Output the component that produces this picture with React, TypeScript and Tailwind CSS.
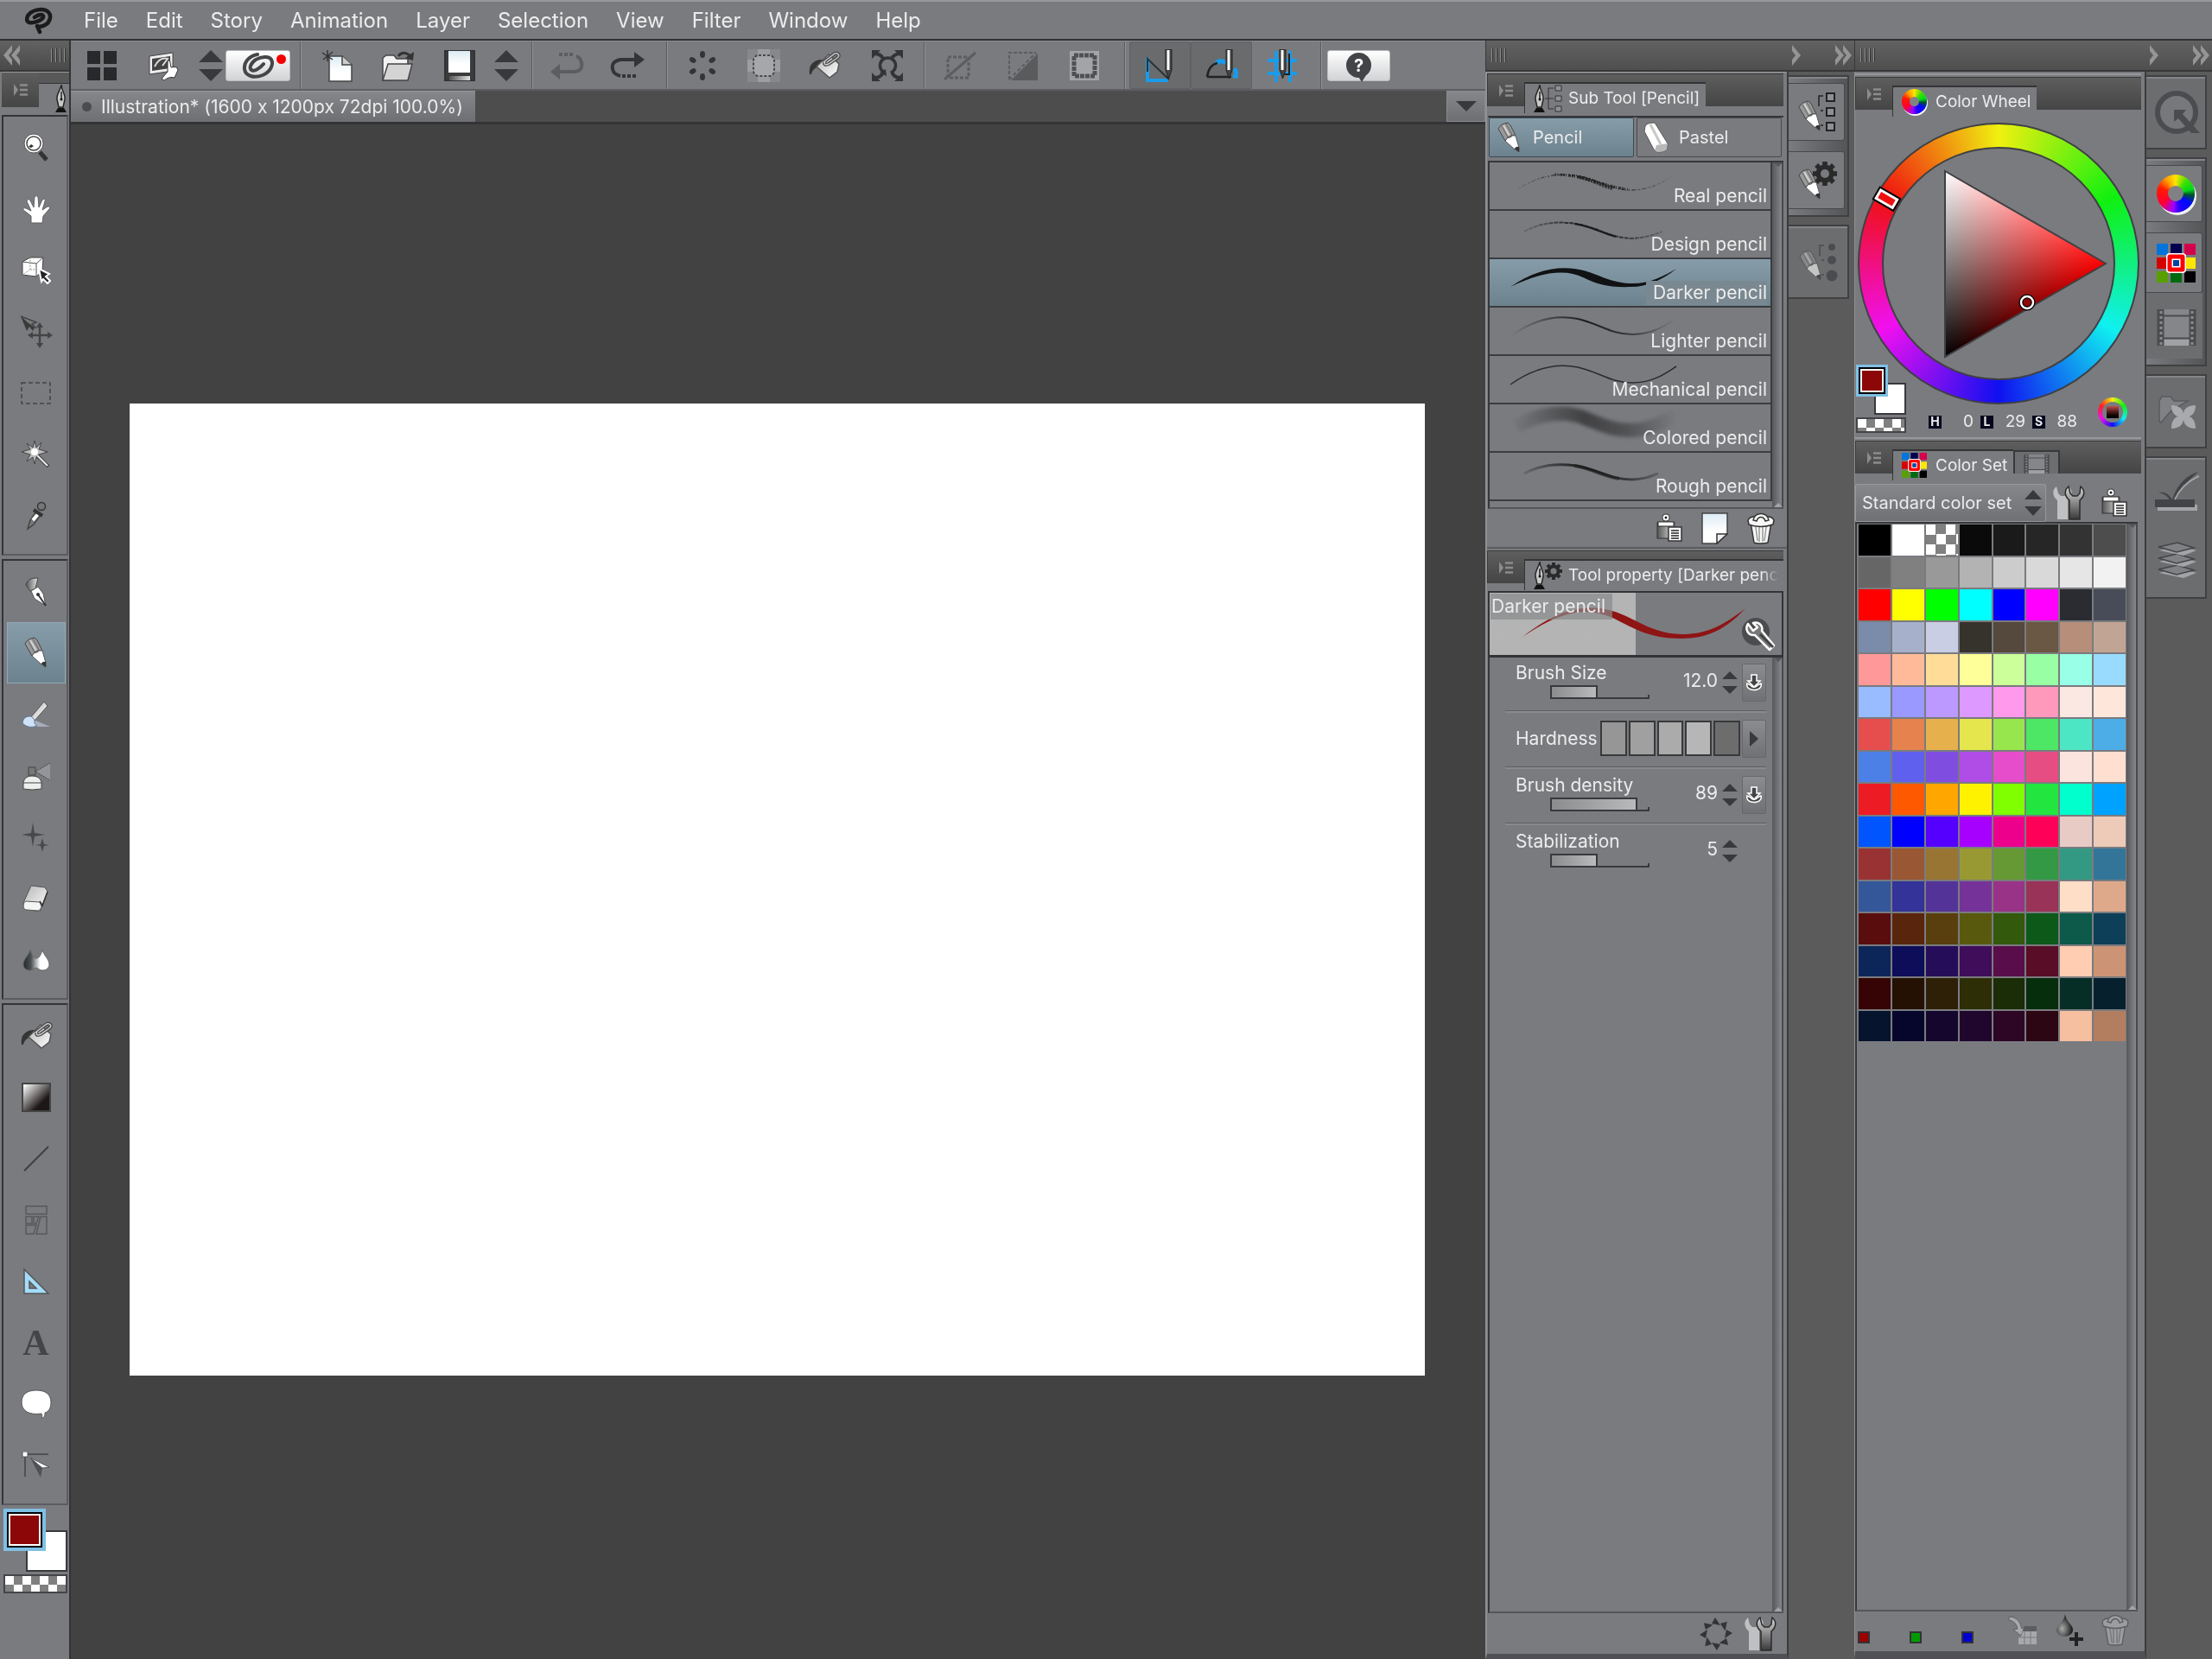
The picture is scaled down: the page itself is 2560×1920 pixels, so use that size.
import type { ReactNode } from "react";

const menus = ["File", "Edit", "Story", "Animation", "Layer", "Selection", "View", "Filter", "Window", "Help"];

const colorSet = [
  ["#000000", "#ffffff", "checker", "#0a0a0a", "#1a1a1a", "#262626", "#333333", "#4d4d4d"],
  ["#666666", "#808080", "#999999", "#b3b3b3", "#cccccc", "#d9d9d9", "#e6e6e6", "#f2f2f2"],
  ["#ff0000", "#ffff00", "#00ff00", "#00ffff", "#0000ff", "#ff00ff", "#2a2c31", "#474c58"],
  ["#7b8cab", "#a7b0cb", "#c9cee5", "#36322c", "#55483c", "#6a5744", "#b68e7a", "#c1a493"],
  ["#ff9999", "#ffbb99", "#ffdd99", "#ffff99", "#ccff99", "#99ffa5", "#99ffe6", "#99dbff"],
  ["#99bbff", "#9999ff", "#bb99ff", "#dd99ff", "#ff99ec", "#ff99bb", "#fbe8e2", "#ffe6db"],
  ["#e64d4d", "#e6824d", "#e6b04d", "#e5e64d", "#98e64d", "#4de665", "#4de6c5", "#4dade6"],
  ["#4d80e6", "#6060ee", "#804de1", "#b04de6", "#e64dcb", "#e64d82", "#fae4dd", "#ffdfcf"],
  ["#ed1c24", "#ff5900", "#ffa600", "#fff200", "#80ff00", "#22e63f", "#00ffcc", "#00a2ff"],
  ["#0055ff", "#0000ff", "#5500ff", "#a600ff", "#ec008c", "#ff0059", "#e8cbc4", "#edcbb8"],
  ["#993333", "#995733", "#997533", "#999933", "#669933", "#339945", "#339982", "#337599"],
  ["#335799", "#333399", "#543399", "#753399", "#993387", "#993357", "#ffdec8", "#dea98b"],
  ["#590d0d", "#59260d", "#593f0d", "#59590d", "#33590d", "#0d5919", "#0d594a", "#0d3f59"],
  ["#0d2659", "#0d0d59", "#260d59", "#3f0d59", "#590d4a", "#590d26", "#ffcdb2", "#cc9474"],
  ["#360404", "#241103", "#2e2006", "#2d2d06", "#1a2d06", "#062d0c", "#062d26", "#06202d"],
  ["#06142d", "#06062d", "#14062d", "#20062d", "#2d0626", "#2d0614", "#f5bfa0", "#b37e60"],
];

/* ---------- icons ---------- */

function Svg({ w, h, children, className = "" }: { w: number; h: number; children: ReactNode; className?: string }) {
  return (
    <svg width={w} height={h} viewBox={`0 0 ${w} ${h}`} fill="none" className={`shrink-0 ${className}`} aria-hidden="true">
      {children}
    </svg>
  );
}

function SharedDefs() {
  return (
    <svg className="absolute h-0 w-0" aria-hidden="true">
      <defs>
        <linearGradient id="metal" x1="0" y1="0" x2="1" y2="0">
          <stop offset="0" stopColor="#555" />
          <stop offset="1" stopColor="#e4e4e4" />
        </linearGradient>
        <linearGradient id="metalDown" x1="0" y1="0" x2="0" y2="1">
          <stop offset="0" stopColor="#d8d8d8" />
          <stop offset="1" stopColor="#3a3a3a" />
        </linearGradient>
        <linearGradient id="paper" x1="0" y1="0" x2="0" y2="1">
          <stop offset="0" stopColor="#dcebf4" />
          <stop offset="0.6" stopColor="#fff" />
        </linearGradient>
        <linearGradient id="soft" x1="0" y1="0" x2="1" y2="1">
          <stop offset="0" stopColor="#b5b5b5" />
          <stop offset="1" stopColor="#fff" />
        </linearGradient>
        <linearGradient id="whiteBlack" x1="0" y1="0" x2="1" y2="1">
          <stop offset="0.05" stopColor="#fff" />
          <stop offset="0.7" stopColor="#1d1817" />
        </linearGradient>
        <linearGradient id="fadeEnds" gradientUnits="userSpaceOnUse" x1="24" y1="0" x2="216" y2="0">
          <stop offset="0" stopColor="#1b1b1b" stopOpacity="0" />
          <stop offset="0.3" stopColor="#1b1b1b" stopOpacity="0.7" />
          <stop offset="0.45" stopColor="#1b1b1b" />
          <stop offset="0.7" stopColor="#1b1b1b" stopOpacity="0.7" />
          <stop offset="1" stopColor="#1b1b1b" stopOpacity="0" />
        </linearGradient>
        <linearGradient id="steel" x1="0" y1="0" x2="1" y2="0">
          <stop offset="0" stopColor="#23282b" />
          <stop offset="0.3" stopColor="#4d5255" />
          <stop offset="0.65" stopColor="#fff" />
        </linearGradient>
        <radialGradient id="drop" cx="0.35" cy="0.65" r="0.6">
          <stop offset="0" stopColor="#a9a9a9" />
          <stop offset="1" stopColor="#1e1e1e" />
        </radialGradient>
      </defs>
    </svg>
  );
}

function Logo() {
  return (
    <Svg w={32} h={32}>
      <path
        d="M17 29 L14 22 Q18 24 23 21 C29 18 31 10 27 6 C22 1 11 3 6 7 C1 11 1 17 5 18 C10 19 19 16 21 12 C22 8 16 8 11 12"
        stroke="#1b1b1b"
        strokeWidth="4.500"
        strokeLinecap="round"
        strokeLinejoin="round"
      />
    </Svg>
  );
}

function Spiral() {
  return (
    <Svg w={38} h={30}>
      <path
        d="M18 2 C8 4 2 11 3 19 C4 27 14 30 24 26 C33 22 37 14 34 8 C31 3 22 5 16 8 C10 12 8 18 11 20 C14 22 20 19 25 13"
        stroke="#454649"
        strokeWidth="4"
        strokeLinecap="round"
      />
    </Svg>
  );
}

function UpDown({ w = 28, h = 36 }: { w?: number; h?: number }) {
  const m = h / 2;
  return (
    <Svg w={w} h={h}>
      <path d={`M0 ${m - 4} L${w / 2} 0 L${w} ${m - 4}Z M0 ${m + 4} L${w / 2} ${h} L${w} ${m + 4}Z`} fill="#38393b" />
    </Svg>
  );
}

function PencilShape() {
  return (
    <>
      <path d="M1 8 Q4 2 12 1 L15 4 L21 16 Q13 14 9 22Z" fill="#999" stroke="#444" />
      <path d="M5 5 L12 18 M10 2 L17 15" stroke="#666" />
      <path d="M7 4 L14 16" stroke="#d5d5d5" strokeWidth="2" />
      <path d="M9 22 Q12 17 15 18 Q17 15 21 16 L25 30 L25 35 L20 32Z" fill="#fff" stroke="#555" />
      <path d="M19.500 31 Q22 28 25 29 L25 35Z" fill="#333" />
    </>
  );
}

function Pencil() {
  return (
    <Svg w={28} h={37}>
      <PencilShape />
    </Svg>
  );
}

function NibShape() {
  return (
    <>
      <path d="M8 1 C8 8 13 12 12 18 L10 27 H5 L3 18 C2 12 7 8 8 1Z" fill="#c9c9c9" stroke="#262626" strokeWidth="1.500" />
      <path d="M8 9 V18" stroke="#222" strokeWidth="1.500" />
      <circle cx="8" cy="18" r="1.500" fill="#111" />
      <path d="M1 33 L4 28 H11 L14 33Z" fill="#111" />
    </>
  );
}

function Gear({ x, y, r, fill = "#2a2a2a", hole = "#7a7b7f" }: { x: number; y: number; r: number; fill?: string; hole?: string }) {
  return (
    <g transform={`translate(${x} ${y})`}>
      {[0, 45, 90, 135].map((a) => (
        <rect key={a} x={-r / 5} y={-r} width={r / 2.5} height={r * 2} fill={fill} transform={`rotate(${a})`} />
      ))}
      <circle r={r * 0.75} fill={fill} />
      <circle r={r * 0.36} fill={hole} />
    </g>
  );
}

function Bucket() {
  return (
    <Svg w={38} h={34}>
      <path d="M2 27 C0 15 8 9 19 10 L11 19 C7 20 5 23 4 27Z" fill="#353535" />
      <path d="M10 18 L24 4 L36 15 L34 24 L25 31Z" fill="url(#soft)" stroke="#555" strokeWidth="1.500" />
      <path d="M18 13 L31 3 C36 2 37 6 34 8 L24 15 C20 17 18 15 20 12" stroke="#444" strokeWidth="4" />
      <path d="M18 13 L31 3 C36 2 37 6 34 8 L24 15 C20 17 18 15 20 12" stroke="#ccc" strokeWidth="1.500" />
    </Svg>
  );
}

function Wrenches() {
  const d = "M4 1 C-2 6 0 13 5 17 V39 H17 V17 C22 13 24 6 18 1 L17 9 L14 12 H9 L6 9Z";
  return (
    <Svg w={38} h={40}>
      <path d={d} fill="#bfc0c2" />
      <g transform="translate(14 0)">
        <path d={d} fill="url(#metalDown)" stroke="#2b2b2b" strokeWidth="1.500" />
      </g>
    </Svg>
  );
}

function ClipboardIcon() {
  return (
    <Svg w={30} h={34}>
      <rect x="1" y="11" width="20" height="18" fill="url(#metal)" stroke="#333" />
      <rect x="2" y="10" width="18" height="5" fill="#fff" stroke="#222" />
      <circle cx="11" cy="5" r="4.500" fill="#333" />
      <circle cx="11" cy="5" r="2.500" stroke="#fff" strokeWidth="2" fill="#222" />
      <rect x="14" y="16" width="15" height="16" fill="#fff" stroke="#333" strokeWidth="1.500" />
      <path d="M17 20 H26 M17 23 H26 M17 26 H26 M17 29 H26" stroke="#222" strokeWidth="1.500" />
    </Svg>
  );
}

function Trash({ dim = false }: { dim?: boolean }) {
  const line = dim ? "#5f6063" : "#333";
  const fill = dim ? "#9c9da0" : "#f7f7f7";
  return (
    <Svg w={32} h={38}>
      <path d="M4 12 L8 36 Q16 38 24 36 L28 12Z" fill={fill} stroke={line} strokeWidth="1.500" />
      <path d="M10 18 L12 34 M14 18 V35 M18 18 V35 M22 18 L20 34" stroke={dim ? "#77787b" : "#999"} strokeWidth="1.500" />
      <path d="M1 10 Q3 6 8 6 H24 Q29 6 31 10 L30 15 Q16 20 2 15Z" fill={fill} stroke={line} strokeWidth="1.500" />
      <path d="M7 10 C8 0 24 0 25 10 L21 11 C19 5 13 5 11 11Z" fill={fill} stroke={line} strokeWidth="1.500" />
    </Svg>
  );
}

function Film({ w = 46, h = 42 }: { w?: number; h?: number }) {
  return (
    <svg width={w} height={h} viewBox="0 0 46 42" preserveAspectRatio="none" fill="none" aria-hidden="true">
      <rect x="8" y="0" width="30" height="42" fill="#85868a" />
      <rect x="8" y="35" width="30" height="7" fill="#a0a1a4" />
      <path d="M8 7.500 H38 M8 33.500 H38" stroke="#4b4c4f" strokeWidth="2" />
      <path d="M4.500 0 V42 M41.500 0 V42" stroke="#4b4c4f" strokeWidth="8" />
      <path d="M5 2 V42 M41 2 V42" stroke="#8a8b8e" strokeWidth="3" strokeDasharray="3 3" />
    </svg>
  );
}

function PaletteIcon({ size = 45 }: { size?: number }) {
  const tiles = ["#0074dd", "#00004f", "#d4004b", "#d40000", "#fff", "#ffe600", "#58a000", "#006a10", "#000"];
  return (
    <svg width={size} height={size} viewBox="0 0 45 45" aria-hidden="true">
      {tiles.map((c, i) => (
        <rect key={c} x={(i % 3) * 16} y={Math.floor(i / 3) * 16} width="13" height="13" fill={c} />
      ))}
      <rect x="11" y="11" width="23" height="23" rx="4" fill="#fff" />
      <rect x="12.500" y="12.500" width="20" height="20" rx="3" fill="#f00" />
      <rect x="17.500" y="17.500" width="10" height="10" fill="#fff" />
      <rect x="19" y="19" width="7" height="7" fill="#0046a0" />
    </svg>
  );
}

function WheelIcon({ className, holeClass }: { className: string; holeClass: string }) {
  return (
    <span
      className={`flex shrink-0 items-center justify-center rounded-full bg-[conic-gradient(#ffe600,#3fe000_40deg,#00d81a_75deg,#00502c_95deg,#0008ff_125deg,#2200ff_165deg,#a000ff_190deg,#ff0030_235deg,#ff1a00_290deg,#ff9a00_325deg,#ffe600)] ${className}`}
    >
      <span className={`rounded-full bg-[#808184] ${holeClass}`} />
    </span>
  );
}

function ListGlyph() {
  return (
    <Svg w={16} h={14}>
      <path d="M0 0 L5 7 L0 14Z" fill="#8c8c8c" />
      <path d="M7 1.500 H16 M7 7 H16 M7 12.500 H16" stroke="#8c8c8c" strokeWidth="2.500" />
    </Svg>
  );
}

function ApplyIcon() {
  return (
    <Svg w={20} h={20}>
      <path d="M2 11 C-1 21 21 21 18 11 L14 13 C12 16 8 16 6 13Z" fill="#444" stroke="#fff" strokeWidth="1.500" />
      <path d="M7 1 H13 V8 H17 L10 15 L3 8 H7Z" fill="#444" stroke="#fff" strokeWidth="1.500" />
    </Svg>
  );
}

function RulerPen({ x = 0 }: { x?: number }) {
  return (
    <g transform={`translate(${x} 0)`}>
      <path d="M1 0 H8 V24 L4.500 34 L1 24Z" fill="#444" stroke="#222" />
      <path d="M4 1 V24" stroke="#fff" strokeWidth="3" />
    </g>
  );
}

/* ---------- toolbar and tool icons ---------- */

const tools: { name: string; icon: ReactNode }[][] = [
  [
    {
      name: "Zoom",
      icon: (
        <Svg w={30} h={34}>
          <path d="M19 22 L27 31" stroke="#333" strokeWidth="5" />
          <circle cx="12" cy="12" r="11" fill="#fff" stroke="#555" />
          <circle cx="12" cy="12" r="8" stroke="#444" strokeWidth="1.500" fill="#fff" />
          <path d="M6 16 L9 13 L12 15 L9 17Z" fill="#333" />
        </Svg>
      ),
    },
    {
      name: "Hand",
      icon: (
        <Svg w={34} h={34}>
          <path
            d="M11 33 L11 25 L2 18 Q1 15 5 16 L11 19 L6 8 Q7 4 10 7 L14 15 L15 3 Q17 0 19 3 L20 15 L24 6 Q28 4 27 8 L24 18 L30 14 Q34 14 32 17 L25 25 L24 33Z"
            fill="#fff"
            stroke="#606164"
          />
        </Svg>
      ),
    },
    {
      name: "Object rotation",
      icon: (
        <Svg w={34} h={32}>
          <path d="M1 6 L10 1 H25 L24 17 L17 23 L1 21Z" fill="#fff" stroke="#444" />
          <path d="M1 6 L17 8 L25 1 M17 8 V23" stroke="#555" />
          <path d="M10 1 V15 L1 21 M10 15 H24" stroke="#999" strokeDasharray="2 1" />
          <path d="M20 14 L32 20 L28 23 L33 28 L30 31 L25 26 L23 29Z" fill="#222" stroke="#fff" strokeWidth="2" />
        </Svg>
      ),
    },
    {
      name: "Move layer",
      icon: (
        <Svg w={38} h={38}>
          <path d="M1 1 L9 8 L17 14 L15 18 L11 13 L8 18Z" fill="#3a3a3a" />
          <path d="M1 1 L19 8 L14 10 L19 15" stroke="#444" strokeWidth="1.500" />
          <path d="M12 23 H34 M23 11 V35" stroke="#444" strokeWidth="2.500" />
          <path d="M9 23 L15 19 V27Z M38 23 L32 19 V27Z M23 8 L19 14 H27Z M23 38 L19 32 H27Z" fill="#444" />
        </Svg>
      ),
    },
    {
      name: "Selection area",
      icon: (
        <Svg w={36} h={26}>
          <rect x="1" y="1" width="33" height="24" stroke="#444" strokeWidth="1.500" strokeDasharray="5 3" />
        </Svg>
      ),
    },
    {
      name: "Auto select",
      icon: (
        <Svg w={34} h={34}>
          <path
            d="M15 1 L17 9 L23 3 L20 11 L30 14 L20 17 L24 25 L17 20 L15 28 L13 20 L6 25 L10 17 L0 14 L10 11 L6 4 L13 9Z"
            fill="#bbb"
            stroke="#444"
          />
          <circle cx="15" cy="14" r="4" fill="#fff" />
          <path d="M18 18 L31 31" stroke="#444" strokeWidth="4" />
          <path d="M18 18 L30 30" stroke="#eee" strokeWidth="2" />
        </Svg>
      ),
    },
    {
      name: "Eyedropper",
      icon: (
        <Svg w={24} h={34}>
          <path d="M2 32 L5 22 L12 12 L17 16 L9 27Z" fill="#777" stroke="#444" strokeWidth="1.500" />
          <path d="M8 22 L14 15" stroke="#fff" strokeWidth="4" />
          <path d="M9 10 L19 17" stroke="#333" strokeWidth="4" />
          <circle cx="18" cy="6" r="4.500" fill="#777" stroke="#333" strokeWidth="1.500" />
        </Svg>
      ),
    },
  ],
  [
    {
      name: "Pen",
      icon: (
        <Svg w={28} h={36}>
          <path d="M2 10 Q4 1 16 2 L13 14 L7 17Z" fill="url(#metal)" stroke="#444" />
          <path d="M8 17 L16 12 L22 20 L25 34 L12 26Z" fill="#fff" stroke="#555" />
          <path d="M25 34 L16 21" stroke="#333" strokeWidth="2" />
          <circle cx="16" cy="21" r="2" fill="#333" />
        </Svg>
      ),
    },
    { name: "Pencil", icon: <Pencil /> },
    {
      name: "Brush",
      icon: (
        <Svg w={34} h={34}>
          <path d="M10 31 L33 31 L14 23Z" fill="#b9c4d6" opacity="0.700" />
          <path d="M10 21 L26 2 L30 7 L15 24Z" fill="url(#soft)" stroke="#555" />
          <path d="M1 27 Q2 18 11 19 L15 23 Q14 28 18 30 Q8 34 1 27Z" fill="#cfe3f8" stroke="#5f7690" />
        </Svg>
      ),
    },
    {
      name: "Airbrush",
      icon: (
        <Svg w={34} h={34}>
          <path d="M16 12 L33 2 V22Z" fill="#94959a" />
          <path d="M33 2 L16 12 L33 22" stroke="#444" strokeDasharray="2 1" />
          <rect x="8" y="7" width="8" height="9" fill="#777" stroke="#444" />
          <path d="M2 32 V24 Q4 17 12 17 Q21 17 23 24 V32 Q12 34 2 32Z" fill="#eee" stroke="#444" />
          <path d="M2 25 H23" stroke="#444" />
        </Svg>
      ),
    },
    {
      name: "Decoration",
      icon: (
        <Svg w={34} h={34}>
          <path d="M13 0 L15 12 L27 14 L15 16 L13 28 L11 16 L0 14 L11 12Z" fill="#48494b" />
          <path d="M24 18 L26 25 L32 26 L26 27 L24 34 L22 27 L16 26 L22 25Z" fill="#48494b" />
        </Svg>
      ),
    },
    {
      name: "Eraser",
      icon: (
        <Svg w={32} h={34}>
          <path d="M10 2 L26 4 L29 9 L20 32 L3 29 L1 22Z" fill="url(#soft)" stroke="#555" />
          <path d="M4 20 Q1 21 1 25 Q1 30 5 30 L18 31 Q22 30 22 26 L20 21Z" fill="#f4f4f4" stroke="#555" />
          <path d="M20 20 L23 25 L29 9" stroke="#333" strokeWidth="1.500" />
        </Svg>
      ),
    },
    {
      name: "Blend",
      icon: (
        <Svg w={32} h={26}>
          <path
            d="M9 1 C8 7 1 12 1 18 C1 23 5 25 9 25 C12 25 14 22 16 22 C18 22 19 25 23 25 C28 25 31 22 31 18 C31 12 24 7 23 1 C22 5 20 11 16 11 C12 11 10 5 9 1Z"
            fill="url(#steel)"
            stroke="#666"
          />
        </Svg>
      ),
    },
  ],
  [
    { name: "Fill", icon: <Bucket /> },
    {
      name: "Gradient",
      icon: (
        <Svg w={34} h={34}>
          <rect x="1" y="1" width="32" height="32" fill="url(#whiteBlack)" stroke="#444" strokeWidth="2" />
        </Svg>
      ),
    },
    {
      name: "Figure",
      icon: (
        <Svg w={30} h={30}>
          <path d="M1 29 L29 1" stroke="#3f3f41" strokeWidth="2" />
        </Svg>
      ),
    },
    {
      name: "Frame border",
      icon: (
        <Svg w={26} h={34}>
          <path d="M1 1 H25 V10 H1Z M1 13 H8 V21 H1Z M10 13 H16 L13 21 H10Z M1 23 H13 L10 33 H1Z M18 13 H25 V33 H13Z" stroke="#58595c" strokeWidth="1.500" />
        </Svg>
      ),
    },
    {
      name: "Ruler",
      icon: (
        <Svg w={32} h={32}>
          <path d="M2 2 L30 30 H2Z M8 16 V24 H16Z" fill="#a3dcfa" fillRule="evenodd" stroke="#555" strokeWidth="1.500" />
        </Svg>
      ),
    },
    {
      name: "Text",
      icon: <span className="font-['Liberation_Serif',serif] text-[42px] leading-10 font-bold text-[#444547]">A</span>,
    },
    {
      name: "Balloon",
      icon: (
        <Svg w={36} h={34}>
          <path d="M18 1 C29 1 35 6 35 15 C35 22 32 26 28 27 C28 31 27 33 24 33 C25 31 25 30 24 28 C10 30 1 25 1 15 C1 6 7 1 18 1Z" fill="#fff" stroke="#555" />
        </Svg>
      ),
    },
    {
      name: "Correct line",
      icon: (
        <Svg w={34} h={32}>
          <path d="M4 3 H31 M4 3 V29" stroke="#505154" strokeWidth="2" />
          <rect x="1" y="0" width="6" height="6" fill="#fff" stroke="#555" />
          <path d="M10 7 L32 18 L24 19 L22 30Z" fill="#505154" />
          <path d="M10 7 L32 18 L24 19Z" fill="#fff" stroke="#555" />
        </Svg>
      ),
    },
  ],
];

function ToolbarButton({ label, children, className = "w-[71px]" }: { label: string; children: ReactNode; className?: string }) {
  return (
    <button type="button" aria-label={label} className={`flex h-full shrink-0 items-center justify-center ${className}`}>
      {children}
    </button>
  );
}

function Divider() {
  return <span className="h-full w-[2px] shrink-0 border-l border-[#5b5c5f] bg-[#919296]" />;
}

function Toolbar() {
  return (
    <div className="flex h-[58px] items-center border-t border-b-2 border-t-[#8a8b8f] border-b-[#5d5e61] bg-[#7a7b7f]">
      <ToolbarButton label="Workspace">
        <Svg w={34} h={34}>
          <path d="M0 0 H15 V15 H0Z M19 0 H34 V15 H19Z M0 19 H15 V34 H0Z M19 19 H34 V34 H19Z" fill="#28292b" />
        </Svg>
      </ToolbarButton>
      <ToolbarButton label="Quick access" className="w-[74px]">
        <Svg w={36} h={34}>
          <path d="M1 6 L28 2 V23 L1 27Z" fill="#eee" stroke="#444" />
          <path d="M4 9 L25 6 V20 L4 23Z" fill="#444" />
          <path d="M7 18 Q13 6 22 9 L16 17" stroke="#ddd" strokeWidth="2" />
          <path d="M22 12 Q25 9 25 14 L26 19 Q33 17 34 22 L30 31 Q24 29 18 34 L15 32 L22 24Z" fill="#fff" stroke="#333" />
        </Svg>
      </ToolbarButton>
      <ToolbarButton label="Switch view" className="w-[34px]">
        <UpDown />
      </ToolbarButton>
      <button
        type="button"
        aria-label="Clip Studio"
        className="relative flex h-9 w-[75px] shrink-0 items-center justify-center rounded-[3px] border border-[#b9babc] bg-linear-to-b from-white to-[#d2d3d5]"
      >
        <Spiral />
        <span className="absolute top-1 right-1 size-[11px] rounded-full bg-[#f50000]" />
      </button>
      <span className="w-[11px]" />
      <Divider />
      <ToolbarButton label="New" className="w-[78px] pl-1">
        <Svg w={36} h={38}>
          <path d="M9 8 H24 L35 18 V37 H9Z" fill="url(#paper)" stroke="#444" strokeWidth="1.500" />
          <path d="M24 8 V18 H35" fill="#ccc" stroke="#444" strokeWidth="1.500" />
          <path d="M7 1 V14 M1 4 L13 12 M13 3 L2 12" stroke="#333" strokeWidth="1.500" />
        </Svg>
      </ToolbarButton>
      <ToolbarButton label="Open" className="w-[68px]">
        <Svg w={38} h={36}>
          <path d="M1 35 V9 L5 6 H14 L17 10 H30 V16 L28 34Z" fill="#f2f2f2" stroke="#444" strokeWidth="1.500" />
          <path d="M7 16 H35 L30 35 H1Z" fill="#d4d4d4" stroke="#444" strokeWidth="1.500" />
          <path d="M19 7 Q24 0 32 6" stroke="#333" strokeWidth="3" />
          <path d="M37 2 L36 12 L27 9Z" fill="#333" />
        </Svg>
      </ToolbarButton>
      <ToolbarButton label="Save" className="w-[74px]">
        <Svg w={36} h={36}>
          <rect x="1" y="1" width="34" height="34" fill="#3b3c3e" stroke="#333" strokeWidth="2" />
          <rect x="5" y="1" width="25" height="25" fill="url(#paper)" />
          <rect x="6" y="30" width="24" height="5" fill="url(#metal)" />
        </Svg>
      </ToolbarButton>
      <ToolbarButton label="Save options" className="w-[34px]">
        <UpDown />
      </ToolbarButton>
      <span className="w-[12px]" />
      <Divider />
      <ToolbarButton label="Undo" className="w-[80px]">
        <Svg w={40} h={32}>
          <path d="M5 23 H28 Q38 22 36 12 Q34 6 30 5" stroke="#5c5d60" strokeWidth="4" />
          <path d="M10 3 H28" stroke="#5c5d60" strokeWidth="4" strokeDasharray="4 2" />
          <path d="M0 23 L11 14 V32Z" fill="#5c5d60" />
        </Svg>
      </ToolbarButton>
      <ToolbarButton label="Redo" className="w-[74px] pr-4">
        <Svg w={40} h={32}>
          <path d="M34 9 H12 Q1 11 3 20 Q4 26 12 28" stroke="#333436" strokeWidth="4" />
          <path d="M14 28 H31" stroke="#333436" strokeWidth="4" strokeDasharray="4 2" />
          <path d="M40 9 L28 0 V18Z" fill="#333436" />
        </Svg>
      </ToolbarButton>
      <Divider />
      <ToolbarButton label="Clear" className="w-[80px]">
        <Svg w={32} h={34}>
          {[0, 60, 120, 180, 240, 300].map((a) => (
            <ellipse key={a} cx="16" cy="4" rx="3" ry="4" fill="#333436" transform={`rotate(${a} 16 17)`} />
          ))}
        </Svg>
      </ToolbarButton>
      <ToolbarButton label="Delete outside selection" className="w-[62px]">
        <Svg w={38} h={38}>
          <rect width="38" height="38" fill="#87888b" />
          <path d="M12 0 H26 V38 H12Z M0 12 H38 V26 H0Z" fill="#9d9ea1" />
          <rect x="7" y="7" width="24" height="24" rx="6" fill="#a6a7aa" stroke="#48494b" strokeWidth="2" strokeDasharray="3 2" />
        </Svg>
      </ToolbarButton>
      <ToolbarButton label="Fill" className="w-[78px]">
        <Bucket />
      </ToolbarButton>
      <ToolbarButton label="Scale up/down/rotate" className="w-[67px]">
        <Svg w={36} h={36}>
          <path d="M13 25 A9 9 0 1 1 24 25" stroke="#333436" strokeWidth="3.500" />
          <path d="M4 4 Q11 5 13 10 M32 4 Q25 5 23 10 M23 24 Q24 31 32 32 M13 25 Q12 31 4 32" stroke="#333436" strokeWidth="4" />
          <path d="M0 0 H10 L0 10Z M36 0 H26 L36 10Z M0 36 H10 L0 26Z M36 36 H26 L36 26Z M16 22 L17 30 L9 26Z" fill="#333436" />
        </Svg>
      </ToolbarButton>
      <span className="w-[9px]" />
      <Divider />
      <ToolbarButton label="Deselect" className="w-[80px]">
        <Svg w={38} h={34}>
          <rect x="5" y="7" width="24" height="24" stroke="#5c5d60" strokeWidth="3" strokeDasharray="4 2" />
          <path d="M1 33 L37 2" stroke="#5c5d60" strokeWidth="3" />
        </Svg>
      </ToolbarButton>
      <ToolbarButton label="Invert selected area" className="w-[66px]">
        <Svg w={34} h={34}>
          <path d="M1 33 V2 H32" stroke="#5c5d60" strokeWidth="2" strokeDasharray="4 2" />
          <path d="M1 33 L32 2" stroke="#5c5d60" strokeWidth="2" strokeDasharray="4 3" />
          <path d="M34 3 V34 H3Z" fill="#5a5b5d" />
        </Svg>
      </ToolbarButton>
      <ToolbarButton label="Show selection border" className="w-[76px]">
        <Svg w={34} h={34}>
          <rect width="34" height="34" fill="#a3a4a7" />
          <rect x="5" y="5" width="24" height="24" stroke="#4f5052" strokeWidth="5" strokeDasharray="5 1" />
        </Svg>
      </ToolbarButton>
      <span className="w-[8px]" />
      <Divider />
      <span className="w-[4px]" />
      <ToolbarButton label="Snap to ruler" className="w-[71px] rounded-[2px] border border-[#606164] bg-[#6a6b6d]">
        <Svg w={36} h={38}>
          <path d="M3 10 V36 H27" stroke="#1a9bea" strokeWidth="4" />
          <path d="M3 26 V11 L28 35" stroke="#263238" strokeWidth="2" />
          <RulerPen x={23} />
        </Svg>
      </ToolbarButton>
      <ToolbarButton label="Snap to special ruler" className="w-[71px] rounded-[2px] border border-[#606164] bg-[#6a6b6d]">
        <Svg w={38} h={38}>
          <path d="M12 17 Q17 11 24 16 M34 22 L37 31 H32" stroke="#1a9bea" strokeWidth="5" />
          <path d="M2 32 Q4 18 14 16 M2 32 H30" stroke="#222" strokeWidth="2.500" />
          <RulerPen x={23} />
        </Svg>
      </ToolbarButton>
      <ToolbarButton label="Snap to grid">
        <Svg w={36} h={38}>
          <path d="M10 2 V38 M26 2 V38 M0 13 H34 M0 28 H34" stroke="#1a9bea" strokeWidth="4" />
          <path d="M17 29 H25 V5" stroke="#222" strokeWidth="2" />
          <RulerPen x={13} />
        </Svg>
      </ToolbarButton>
      <span className="w-[8px]" />
      <Divider />
      <span className="w-[6px]" />
      <button
        type="button"
        aria-label="Support"
        className="flex h-9 w-[73px] shrink-0 items-center justify-center rounded-[3px] border border-[#b9babc] bg-linear-to-b from-white to-[#d2d3d5]"
      >
        <span className="relative flex size-[29px] items-center justify-center rounded-full bg-[#434447] text-xl font-bold text-white">
          ?
          <span className="absolute -bottom-[5px] left-[13px] border-x-[5px] border-t-[8px] border-x-transparent border-t-[#434447]" />
        </span>
      </button>
    </div>
  );
}

/* ---------- shared panel parts ---------- */

function Grip() {
  return (
    <span className="flex gap-[3px]">
      {[0, 1, 2, 3].map((i) => (
        <span key={i} className="h-4 w-[2px] border-l border-[#8f8f8f] bg-[#333]" />
      ))}
    </span>
  );
}

function Chevrons({ double = false, left = false }: { double?: boolean; left?: boolean }) {
  return (
    <Svg w={double ? 20 : 11} h={24} className={left ? "rotate-180" : ""}>
      <path d="M0 0 L10 12 L0 24 V17 L4 12 L0 7Z" fill="#959595" />
      {double && <path d="M9 0 L19 12 L9 24 V17 L13 12 L9 7Z" fill="#959595" />}
    </Svg>
  );
}

function DockHeader() {
  return (
    <div className="flex h-9 items-center border-b-2 border-l border-[#37383a] bg-linear-to-b from-[#626262] to-[#4f4f4f] pr-[2px] pl-[6px]">
      <Grip />
      <button type="button" aria-label="Collapse panel" className="mr-[39px] ml-auto">
        <Chevrons />
      </button>
      <button type="button" aria-label="Collapse dock">
        <Chevrons double />
      </button>
    </div>
  );
}

function PanelTabs({ icon, title, extra, fill = false }: { icon: ReactNode; title: string; extra?: ReactNode; fill?: boolean }) {
  return (
    <div className="flex h-[38px] items-end border-t border-l border-[#3a3a3b] bg-linear-to-b from-[#5e5e5e] to-[#454545]">
      <button type="button" aria-label="Panel menu" className="flex h-full w-[42px] items-center justify-center">
        <ListGlyph />
      </button>
      <div
        className={`relative -mb-2 flex h-[36px] items-center gap-[7px] border-t-2 border-l border-[#333436] bg-[#7a7b7f] pb-px pl-[9px] ${fill ? "flex-1" : "pr-[7px]"}`}
      >
        {icon}
        <h2
          className={`text-[19px] leading-6 whitespace-nowrap ${fill ? "[mask-image:linear-gradient(to_right,black_92%,transparent)]" : ""}`}
        >
          {title}
        </h2>
      </div>
      {extra}
    </div>
  );
}

function Swatches({ big = false }: { big?: boolean }) {
  return (
    <div className={big ? "w-[74px]" : "w-[58px]"}>
      <div className={`relative ${big ? "h-[73px]" : "h-[58px]"}`}>
        <button
          type="button"
          aria-label="Sub color"
          className={`absolute right-0 bottom-0 border-2 border-[#38393b] bg-white ${big ? "size-[48px]" : "size-[37px]"}`}
        />
        <button
          type="button"
          aria-label="Main color"
          className={`absolute top-0 left-0 border-[#7fc0e4] p-0 ${big ? "size-[49px] border-4" : "size-[37px] border-[3px]"}`}
        >
          <span className="block size-full border-2 border-black bg-white p-[2px]">
            <span className="block size-full bg-[#8c0707]" />
          </span>
        </button>
      </div>
      <button
        type="button"
        aria-label="Transparent color"
        className={`mt-[3px] block w-full border-2 border-[#444548] bg-[conic-gradient(#808080_25%,#fff_25%_50%,#808080_50%_75%,#fff_75%)] bg-[length:20px_20px] ${big ? "h-[22px]" : "h-[18px]"}`}
      />
    </div>
  );
}

function ScrollTrack() {
  return (
    <div className="flex w-[13px] shrink-0 flex-col items-center justify-between border-x-2 border-l-[#5b5c5f] border-r-[#48494c] bg-linear-to-r from-[#5f6063] to-[#86878b]">
      <span className="border-x-[5px] border-t-[5px] border-x-transparent border-t-[#55565a]" />
      <span className="border-x-[5px] border-b-[5px] border-x-transparent border-b-[#a3a4a7]" />
    </div>
  );
}

/* ---------- sub tool + tool property ---------- */

const subTools: { name: string; stroke: ReactNode; active?: boolean }[] = [
  {
    name: "Real pencil",
    stroke: (
      <>
        <path d="M34 30 C60 14 80 13 100 15 C128 20 138 32 165 32 C190 31 205 20 214 14" stroke="url(#fadeEnds)" strokeWidth="1.500" strokeDasharray="2 2 4 1 1 2" />
        <path d="M75 14 C110 14 128 27 160 31" stroke="url(#fadeEnds)" strokeWidth="3" strokeDasharray="2 1 1 2 3 1" />
        <path d="M104 17 C118 20 128 26 142 30" stroke="#222" strokeWidth="4" strokeDasharray="2 1 3 1" opacity="0.800" />
      </>
    ),
  },
  {
    name: "Design pencil",
    stroke: (
      <>
        <path d="M40 24 C60 13 80 12 100 15 C128 20 138 31 165 32 C180 31 190 28 200 24" stroke="url(#fadeEnds)" strokeWidth="2" strokeDasharray="5 1" />
        <path d="M98 15 C118 18 128 25 146 30" stroke="#1b1b1b" strokeWidth="2" />
      </>
    ),
  },
  {
    name: "Darker pencil",
    stroke: (
      <path
        d="M24 32 C50 14 75 8 98 11 C122 14 136 27 162 28 C185 29 202 19 216 11 C200 24 182 32 164 32 C138 33 124 29 108 21 C90 12 62 13 24 32Z"
        fill="#101214"
      />
    ),
    active: true,
  },
  {
    name: "Lighter pencil",
    stroke: <path d="M26 32 C55 11 82 9 102 13 C128 19 140 31 165 31 C190 31 205 19 214 14" stroke="url(#fadeEnds)" strokeWidth="2" />,
  },
  {
    name: "Mechanical pencil",
    stroke: <path d="M24 33 C55 11 82 9 102 13 C128 19 140 31 165 31 C190 31 205 19 216 12" stroke="#2b2b2b" strokeWidth="1.500" />,
  },
  {
    name: "Colored pencil",
    stroke: (
      <path d="M30 26 C60 8 90 8 110 16 C130 24 145 31 165 30 C185 30 200 20 216 14" stroke="url(#fadeEnds)" strokeWidth="16" opacity="0.600" className="blur-[2px]" />
    ),
  },
  {
    name: "Rough pencil",
    stroke: (
      <>
        <path d="M40 24 C60 13 80 12 100 15 C128 20 138 31 165 31 C180 30 185 28 195 24" stroke="url(#fadeEnds)" strokeWidth="3" />
        <path d="M98 15 C118 18 128 26 150 30" stroke="#1f1f1f" strokeWidth="4" opacity="0.600" />
      </>
    ),
  },
];

function SubToolPanel() {
  return (
    <section className="border-t border-[#97989b] pt-px">
      <div className="mr-[4px]">
        <PanelTabs
          title="Sub Tool [Pencil]"
          icon={
            <Svg w={34} h={34}>
              <NibShape />
              <path d="M24 5 H18 V29 H24 M14 17 H24" stroke="#333" />
              <path d="M26 2 H33 V8 H26Z M26 14 H33 V20 H26Z M26 26 H33 V32 H26Z" fill="#8f9093" stroke="#333" />
            </Svg>
          }
        />
      </div>
      <div className="mt-[11px] mr-[4px] ml-px grid h-[49px] grid-cols-2 gap-[3px] border-t-2 border-[#36373a] pr-[2px] pb-px pl-px text-[20px]">
        <button
          type="button"
          className="flex items-center gap-[13px] rounded-[2px] border border-[#3a4a53] bg-linear-to-b from-[#879ca9] to-[#6c838f] pl-[9px]"
        >
          <Pencil />
          Pencil
        </button>
        <button type="button" className="flex items-center gap-[11px] rounded-[2px] border border-[#48494c] pl-[7px]">
          <Svg w={30} h={36}>
            <path d="M2 5 Q4 1 13 1 L28 25 L27 32 Q24 35 16 35 L12 32 L1 11Z" fill="#fff" stroke="#555" />
            <path d="M28 25 L15 27 L13 33 L16 35 Q24 35 27 32Z" fill="#b9b9b9" />
            <path d="M8 3 L20 26" stroke="#c9c9c9" strokeWidth="3" />
          </Svg>
          Pastel
        </button>
      </div>
      <div className="mt-[3px] mr-[4px] ml-px flex border-t-2 border-b-2 border-l-2 border-t-[#36373a] border-b-[#55565a] border-l-[#36373a]">
        <ul className="mb-[7px] min-w-0 flex-1 border-r-2 border-[#3b3c3f]">
          {subTools.map((t) => (
            <li key={t.name} className="h-14 border-b-2 border-[#3b3c3f]">
              <button
                type="button"
                className={`relative flex size-full items-end justify-end pr-[4px] pb-px text-[21px] leading-7 ${t.active ? "bg-linear-to-b from-[#879ca9] to-[#6c838f]" : ""}`}
              >
                <Svg w={240} h={46} className="absolute top-0 left-0">
                  {t.stroke}
                </Svg>
                <span className={`relative pl-2 ${t.active ? "bg-[#7a8891]" : ""}`}>{t.name}</span>
              </button>
            </li>
          ))}
        </ul>
        <ScrollTrack />
      </div>
      <div className="flex h-[46px] items-center justify-end gap-[22px] border-b-2 border-[#5b5c5f] pr-[14px]">
        <button type="button" aria-label="Register material">
          <ClipboardIcon />
        </button>
        <button type="button" aria-label="Create sub tool">
          <Svg w={31} h={37}>
            <path d="M1 1 H30 V25 L18 36 H1Z" fill="url(#paper)" stroke="#444" strokeWidth="1.500" />
            <path d="M18 36 V25 H30Z" fill="#eee" stroke="#333" strokeWidth="1.500" />
          </Svg>
        </button>
        <button type="button" aria-label="Delete sub tool">
          <Trash />
        </button>
      </div>
    </section>
  );
}

function PropertyRow({ children, last = false }: { children: ReactNode; last?: boolean }) {
  return <div className={`flex h-14 ${last ? "" : "border-b border-[#5d5e61] shadow-[0_2px_0_#898a8e]"}`}>{children}</div>;
}

type SliderProps = { id: string; label: string; value: string; percent: number; apply?: boolean; last?: boolean };

function SliderRow({ id, label, value, percent, apply = false, last = false }: SliderProps) {
  return (
    <PropertyRow last={last}>
      <div className="flex-1 pl-3">
        <label htmlFor={id} className="block leading-6">
          {label}
        </label>
        <div className="relative mt-[2px] ml-10 h-4 w-[115px] border-b-2 border-[#38393b]">
          <span
            className="absolute inset-y-0 left-0 border-2 border-b-0 border-[#38393b] bg-linear-to-r from-[#8b8c8e] to-[#b9babb]"
            style={{ width: `${percent}%` }}
          />
          <span className="absolute right-0 bottom-0 h-[3px] w-[2px] bg-[#38393b]" />
          <input id={id} type="range" defaultValue={percent} className="absolute inset-0 size-full opacity-0" />
        </div>
      </div>
      <div className="flex h-[45px] items-center">
        <input type="text" aria-label={`${label} value`} defaultValue={value} className="mb-1 w-14 bg-transparent text-right" />
        <button type="button" aria-label={`Adjust ${label}`} className="mx-[5px]">
          <UpDown w={18} h={26} />
        </button>
        {apply ? (
          <button
            type="button"
            aria-label={`${label} dynamics`}
            className="flex h-11 w-[28px] items-center justify-center rounded-[2px] border border-[#66676a] bg-linear-to-b from-[#8b8c8f] to-[#707174]"
          >
            <ApplyIcon />
          </button>
        ) : (
          <span className="w-[28px]" />
        )}
      </div>
    </PropertyRow>
  );
}

function ToolPropertyPanel() {
  return (
    <section className="flex min-h-0 flex-1 flex-col pt-[2px]">
      <div className="mr-[4px]">
        <PanelTabs
          fill
          title="Tool property [Darker penc"
          icon={
            <Svg w={34} h={34}>
              <NibShape />
              <Gear x={24} y={12} r={10} />
            </Svg>
          }
        />
      </div>
      <div className="relative mt-[9px] mr-[4px] ml-px h-[77px] shrink-0 border-2 border-b-[3px] border-[#333436] bg-linear-to-r from-[#b4b4b4] from-50% to-[#7a7b7f] to-50%">
        <Svg w={334} h={72} className="absolute top-0 left-0">
          <path
            d="M34 54 C70 26 95 15 128 18 C165 23 180 47 222 48 C252 48 270 38 296 18 C274 42 252 53 222 53 C182 53 164 39 140 28 C105 14 72 27 34 54Z"
            fill="#8f1414"
          />
        </Svg>
        <span className="absolute top-px left-px bg-[#88898a]/70 pr-2 pl-px text-[21px] leading-[30px]">Darker pencil</span>
        <button type="button" aria-label="Sub tool detail" className="absolute right-[7px] bottom-[2px]">
          <Svg w={40} h={42}>
            <circle cx="17" cy="17" r="16" fill="#4b4c4e" />
            <path d="M8 8 C4 14 8 22 16 21 L33 38 L38 33 L24 16 C26 10 20 5 14 7 L19 12 L14 16Z" fill="#777" stroke="#fff" strokeWidth="2.500" strokeLinejoin="round" />
            <path d="M22 20 L37 35" stroke="#444" strokeWidth="3" />
          </Svg>
        </button>
      </div>
      <div className="mr-[4px] ml-px flex min-h-0 flex-1 border-b-2 border-l-2 border-b-[#55565a] border-l-[#36373a]">
        <div className="flex min-w-0 flex-1 flex-col gap-[9px] pt-[6px] pr-[7px] pl-[18px] text-[21px]">
          <SliderRow id="brush-size" label="Brush Size" value="12.0" percent={48} apply />
          <PropertyRow>
            <span className="w-[110px] pl-3 leading-[45px]">Hardness</span>
            <div className="flex h-[45px] flex-1 items-center gap-[2px]">
              <button type="button" aria-label="Hardness 1" className="h-[41px] flex-1 border-2 border-[#38393b] bg-[#969696]" />
              <button type="button" aria-label="Hardness 2" className="h-[41px] flex-1 border-2 border-[#38393b] bg-[#a0a0a0]" />
              <button type="button" aria-label="Hardness 3" className="h-[41px] flex-1 border-2 border-[#38393b] bg-[#ababab]" />
              <button type="button" aria-label="Hardness 4" className="h-[41px] flex-1 border-2 border-[#38393b] bg-[#b6b6b6]" />
              <button type="button" aria-label="Hardness 5" className="h-[41px] flex-1 border-2 border-[#38393b] bg-[#6d6d6d]" />
              <button
                type="button"
                aria-label="More hardness"
                className="flex h-11 w-[28px] items-center justify-center rounded-[2px] border border-[#66676a] bg-linear-to-b from-[#8b8c8f] to-[#707174]"
              >
                <Svg w={10} h={18}>
                  <path d="M0 0 L10 9 L0 18Z" fill="#38393b" />
                </Svg>
              </button>
            </div>
          </PropertyRow>
          <SliderRow id="density" label="Brush density" value="89" percent={88} apply />
          <SliderRow id="stabilization" label="Stabilization" value="5" percent={48} last />
        </div>
        <ScrollTrack />
      </div>
      <div className="flex h-[47px] shrink-0 items-center justify-end gap-[14px] pr-[11px]">
        <button type="button" aria-label="Reset">
          <Svg w={38} h={38}>
            {[0, 45, 90, 135, 180, 225, 270, 315].map((a) => (
              <path key={a} d="M14 7 L18 0 L24 9Z" fill="#333436" transform={`rotate(${a} 19 19)`} />
            ))}
          </Svg>
        </button>
        <button type="button" aria-label="Tool settings">
          <Wrenches />
        </button>
      </div>
    </section>
  );
}

/* ---------- color panels ---------- */

function ColorWheel() {
  return (
    <div className="relative mx-auto size-[328px]">
      <div className="absolute inset-px rounded-full border-2 border-[#3f4043] bg-[conic-gradient(from_-60deg,#f01010,#f0f010,#10f010,#10f0f0,#1010f0,#f010f0,#f01010)]">
        <div className="absolute inset-[26px] rounded-full border-2 border-[#3f4043] bg-[#7a7b7f]" />
      </div>
      <Svg w={328} h={328} className="absolute inset-0">
        <defs>
          <linearGradient id="triRed" gradientUnits="userSpaceOnUse" x1="102" y1="272" x2="195" y2="110">
            <stop offset="0" stopColor="#000" />
            <stop offset="1" stopColor="#f00" />
          </linearGradient>
          <linearGradient id="triCyan" gradientUnits="userSpaceOnUse" x1="102" y1="57" x2="195" y2="218">
            <stop offset="0" stopColor="#0ff" />
            <stop offset="1" stopColor="#000" />
          </linearGradient>
        </defs>
        <path d="M102 57 L288 164 L102 272Z" fill="url(#triRed)" />
        <path d="M102 57 L288 164 L102 272Z" fill="url(#triCyan)" className="mix-blend-screen" />
        <path d="M102 57 L288 164 L102 272Z" stroke="#3f4043" strokeWidth="2" />
        <circle cx="197" cy="209" r="7" fill="#8c0707" stroke="#000" strokeWidth="5" />
        <circle cx="197" cy="209" r="7" stroke="#fff" strokeWidth="2.500" />
        <g transform="rotate(30 34 89)">
          <rect x="20" y="80" width="29" height="18" fill="#000" />
          <rect x="22" y="82" width="25" height="14" fill="#fff" />
          <rect x="25" y="85" width="19" height="8" fill="#f01010" />
        </g>
      </Svg>
    </div>
  );
}

function HlsValue({ tag, value }: { tag: string; value: string }) {
  return (
    <div className="flex w-[60px] items-center">
      <span className="flex size-[15px] items-center justify-center bg-[#05051c] text-sm leading-none font-bold">{tag}</span>
      <span className="w-[37px] text-right text-[19px] leading-5">{value}</span>
    </div>
  );
}

function ColorPanels() {
  return (
    <div className="flex w-[338px] shrink-0 flex-col border-r-2 border-b-[9px] border-l border-r-[#3a3b3e] border-b-[#505154] border-l-[#8f9094] bg-[#7a7b7f]">
      <section className="mt-[2px] mr-[4px] border-t-2 border-[#97989b] pt-[2px]">
        <PanelTabs
          title="Color Wheel"
          icon={<WheelIcon className="mr-[3px] ml-px size-[29px] shadow-[1px_2px_0_#f5f5f5]" holeClass="size-[11px]" />}
        />
        <div className="pt-[14px]">
          <ColorWheel />
        </div>
        <div className="relative -mt-[47px] flex h-[84px] items-start pl-px">
          <Swatches />
          <div className="mt-[56px] ml-[26px] flex">
            <HlsValue tag="H" value="0" />
            <HlsValue tag="L" value="29" />
            <HlsValue tag="S" value="88" />
          </div>
          <button
            type="button"
            aria-label="Switch color space"
            className="mt-[38px] mr-[16px] ml-auto flex size-[34px] items-center justify-center rounded-full bg-[conic-gradient(from_-60deg,#ff2020,#f0f010,#10f010,#10f0f0,#1010f0,#f010f0,#ff2020)]"
          >
            <span className="flex size-6 items-center justify-center rounded-full bg-[#7a7b7f]">
              <span className="size-[14px] bg-linear-to-b from-[#c05050] to-black" />
            </span>
          </button>
        </div>
      </section>
      <section className="mr-[4px] flex min-h-0 flex-1 flex-col border-t-2 border-[#97989b] pt-[2px]">
        <PanelTabs
          title="Color Set"
          icon={
            <span className="mr-[3px] ml-px">
              <PaletteIcon size={29} />
            </span>
          }
          extra={
            <button type="button" aria-label="Timeline" className="flex h-[27px] w-[54px] items-end justify-center border-2 border-b-0 border-[#38393b] bg-[#6d6e70]">
              <Film w={30} h={22} />
            </button>
          }
        />
        <div className="mt-3 mr-[16px] flex h-11 items-center">
          <div className="relative h-full w-[221px] rounded-[2px] border border-[#97989b] bg-linear-to-b from-[#86878b] to-[#707174]">
            <select aria-label="Color set" className="size-full appearance-none bg-transparent pl-[7px] text-[20px]">
              <option>Standard color set</option>
            </select>
            <span className="pointer-events-none absolute top-[6px] right-[4px]">
              <UpDown w={20} h={30} />
            </span>
          </div>
          <button type="button" aria-label="Edit color set" className="ml-[8px]">
            <Wrenches />
          </button>
          <button type="button" aria-label="Register color set" className="ml-auto">
            <ClipboardIcon />
          </button>
        </div>
        <div className="mr-[4px] flex min-h-0 flex-1 border-t-2 border-b-2 border-l-2 border-t-[#36373a] border-b-[#55565a] border-l-[#36373a]">
          <div className="flex-1 pt-px pr-px pl-[2px]">
            <div className="grid h-[598px] grid-cols-8 grid-rows-16 gap-[2px]">
              {colorSet.flat().map((c, i) =>
                c === "checker" ? (
                  <button
                    key={i}
                    type="button"
                    aria-label="Transparent"
                    className="bg-[conic-gradient(#808080_25%,#fff_25%_50%,#808080_50%_75%,#fff_75%)] bg-[length:23px_23px]"
                  />
                ) : (
                  <button key={i} type="button" aria-label={c} style={{ backgroundColor: c }} />
                ),
              )}
            </div>
          </div>
          <ScrollTrack />
        </div>
        <div className="flex h-[46px] shrink-0 items-center pr-[14px] pl-[3px]">
          <div className="mt-[14px] flex gap-[46px]">
            <button type="button" aria-label="Red" className="size-[14px] border-2 border-[#333436] bg-[#9b0000]" />
            <button type="button" aria-label="Green" className="size-[14px] border-2 border-[#333436] bg-[#009b00]" />
            <button type="button" aria-label="Blue" className="size-[14px] border-2 border-[#333436] bg-[#0000d0]" />
          </div>
          <div className="mb-1 ml-auto flex items-center gap-[21px]">
            <button type="button" aria-label="Replace color">
              <Svg w={34} h={36}>
                <path d="M1 3 Q13 3 16 17 L19 15 L15 25 L6 18 L11 17 Q9 8 1 7Z" fill="#a7a8ab" stroke="#5f6063" />
                <path d="M17 20 L19 14 H33 V20Z" fill="#5c5d60" />
                <path d="M17 20 H33 V35 H12 V27 L15 26Z" fill="#a7a8ab" />
                <path d="M12 27 H33 M19 20 V35 M26 20 V35" stroke="#7a7b7f" />
              </Svg>
            </button>
            <button type="button" aria-label="Add color">
              <Svg w={32} h={38}>
                <path d="M11 1 C12 10 21 14 20 20 C19 29 2 29 1 20 C1 14 10 10 11 1Z" fill="url(#drop)" />
                <path d="M16 30 H32 M24 22 V38" stroke="#222" strokeWidth="4" />
              </Svg>
            </button>
            <button type="button" aria-label="Delete color">
              <Trash dim />
            </button>
          </div>
        </div>
      </section>
    </div>
  );
}

/* ---------- icon docks ---------- */

function DockSlot({ label, children, active = false, className }: { label: string; children: ReactNode; active?: boolean; className: string }) {
  return (
    <button
      type="button"
      aria-label={label}
      className={`flex w-full items-center justify-center pl-1 ${active ? "rounded-r-[3px] border-y border-r border-[#48494c] bg-[#7a7b7f]" : ""} ${className}`}
    >
      {children}
    </button>
  );
}

const dockBox = "w-[70px] border-2 border-l-0 border-[#3f4042] shadow-[inset_0_2px_0_#85868a]";

function SubToolDock() {
  return (
    <div className="flex flex-1 flex-col gap-[9px] pt-1">
      <div className={`${dockBox} flex h-[164px] flex-col gap-3 bg-linear-to-r from-[#7a7b7f] to-[#545557] py-[7px] pr-[3px]`}>
        <DockSlot label="Sub Tool" active className="h-[67px]">
          <Svg w={46} h={46}>
            <g transform="translate(0 9)">
              <PencilShape />
            </g>
            <path d="M24 16 V4 H29 M26 21 H29 M26 38 H29" stroke="#222" strokeWidth="1.500" />
            <path d="M33 1 H42 V10 H33Z M33 18 H42 V27 H33Z M33 35 H42 V44 H33Z" fill="#8f9093" stroke="#222" strokeWidth="2" />
          </Svg>
        </DockSlot>
        <DockSlot label="Tool property" active className="h-[67px]">
          <Svg w={46} h={46}>
            <g transform="translate(0 9)">
              <PencilShape />
            </g>
            <Gear x={31} y={15} r={14} />
          </Svg>
        </DockSlot>
      </div>
      <div className={`${dockBox} flex h-[86px] bg-[#6c6d6f] pr-[3px]`}>
        <DockSlot label="Brush size" className="h-full">
          <Svg w={46} h={46}>
            <g transform="translate(0 9)" opacity="0.600">
              <PencilShape />
            </g>
            <path d="M24 16 V4 H29 M26 21 H29 M26 38 H29" stroke="#4b4c4f" strokeWidth="1.500" />
            <circle cx="38" cy="6" r="4" fill="#4b4c4f" />
            <circle cx="38" cy="21" r="5" fill="#4b4c4f" />
            <circle cx="38" cy="39" r="6.500" fill="#4b4c4f" />
          </Svg>
        </DockSlot>
      </div>
    </div>
  );
}

function MaterialDock() {
  return (
    <div className="flex flex-1 flex-col gap-[9px] pt-1">
      <div className={`${dockBox} flex h-[86px] bg-[#6c6d6f]`}>
        <DockSlot label="Quick access" className="h-full">
          <Svg w={56} h={54}>
            <circle cx="27" cy="27" r="22" fill="#77787b" stroke="#4b4c4f" strokeWidth="6" />
            <path d="M24 24 L38 24 L34 29 L54 51 H44 L29 34 L24 38Z" fill="#4b4c4f" />
          </Svg>
        </DockSlot>
      </div>
      <div className={`${dockBox} flex h-[242px] flex-col bg-[#6c6d6f] bg-linear-to-r from-[#7a7b7f] to-[#545557] py-[7px] pr-[3px]`}>
        <DockSlot label="Color Wheel" active className="mb-3 h-[66px]">
          <WheelIcon className="size-[44px] shadow-[2px_3px_0_#f0f0f0]" holeClass="size-[18px]" />
        </DockSlot>
        <DockSlot label="Color Set" active className="h-[70px]">
          <PaletteIcon />
        </DockSlot>
        <DockSlot label="Timeline" className="flex-1 bg-[#6c6d6f] pt-1">
          <Film />
        </DockSlot>
      </div>
      <div className={`${dockBox} flex h-[86px] bg-[#6c6d6f]`}>
        <DockSlot label="Material" className="h-full pt-1">
          <Svg w={44} h={40}>
            <path d="M1 30 V6 L4 1 H14 L18 6 H34 L14 18 L3 31Z" fill="#808184" stroke="#5a5b5e" strokeWidth="1.500" />
            <path
              d="M29 24 C20 26 15 20 15 11 C24 11 30 16 29 24 C28 16 33 11 43 11 C43 20 38 26 29 24 C38 22 43 28 43 38 C34 38 28 33 29 24 C30 33 24 38 15 38 C15 28 20 22 29 24Z"
              fill="#a9aaad"
            />
          </Svg>
        </DockSlot>
      </div>
      <div className={`${dockBox} flex h-[165px] flex-col bg-[#6c6d6f] pb-1`}>
        <DockSlot label="Layer property" className="flex-1">
          <Svg w={52} h={48}>
            <path d="M3 39 H49 V46 H3Z" fill="#a3a4a7" />
            <path d="M0 33 H46 V42 H0Z" fill="#434447" />
            <path d="M4 25 Q14 23 20 33 Q28 8 50 1 Q32 16 24 34 H17 Q14 27 4 25Z" fill="#434447" />
            <path d="M23 33 Q32 14 51 6" stroke="#a3a4a7" strokeWidth="2" />
          </Svg>
        </DockSlot>
        <DockSlot label="Layers" className="flex-1">
          <Svg w={46} h={44}>
            {[28, 15, 2].map((y) => (
              <g key={y} transform={`translate(0 ${y})`}>
                <path d="M2 9 L24 3 L45 9 L30 15Z" fill="#a3a4a7" />
                <path d="M1 5 L23 0 L42 6 L22 11Z" fill="#808184" stroke="#434447" strokeWidth="1.500" />
              </g>
            ))}
          </Svg>
        </DockSlot>
      </div>
    </div>
  );
}

/* ---------- page ---------- */

function ToolColumn() {
  return (
    <aside className="flex w-[82px] shrink-0 flex-col border-r-2 border-[#333436] bg-[#7a7b7f]">
      <div className="flex h-[36px] shrink-0 items-center justify-between border-b-2 border-[#37383a] bg-linear-to-b from-[#626262] to-[#4a4a4a] pr-[4px] pl-[3px]">
        <button type="button" aria-label="Collapse tools">
          <Chevrons double left />
        </button>
        <Grip />
      </div>
      <div className="ml-[2px] flex h-[50px] shrink-0 border-t border-[#97989b]">
        <button type="button" aria-label="Tool menu" className="flex h-[40px] w-[43px] items-center justify-center bg-linear-to-b from-[#5e5e5e] to-[#454545]">
          <ListGlyph />
        </button>
        <div className="flex flex-1 flex-col items-end">
          <div className="h-[13px] w-full border-b border-[#333436] bg-[#585858]" />
          <Svg w={17} h={34}>
            <NibShape />
          </Svg>
        </div>
      </div>
      {tools.map((group, g) => (
        <div key={g} className="mr-px mb-1 ml-[2px] border-2 border-t-[#333436] border-r-[#5b5c5f] border-b-[#5b5c5f] border-l-[#333436] pb-[9px] pl-[2px]">
          {group.map((t) => (
            <button
              key={t.name}
              type="button"
              aria-label={t.name}
              className={`mx-auto flex h-[71px] w-[68px] items-center justify-center ${t.name === "Pencil" ? "border border-[#8fa9b6] bg-linear-to-b from-[#879ca9] to-[#6c838f]" : ""}`}
            >
              {t.icon}
            </button>
          ))}
        </div>
      ))}
      <div className="pl-1">
        <Swatches big />
      </div>
    </aside>
  );
}

export default function App() {
  return (
    <div className="flex h-screen flex-col overflow-hidden bg-[#5b5b5b] font-['Inter','Liberation_Sans',sans-serif] text-[#ececec] [font-feature-settings:'calt'_0]">
      <SharedDefs />
      <header className="flex h-[47px] shrink-0 items-center border-t-2 border-b-2 border-t-[#97989b] border-b-[#2f3032] bg-[#7a7b7f] pl-[29px]">
        <Logo />
        <nav className="ml-[36px] flex gap-[32px] text-[24px] leading-7">
          {menus.map((m) => (
            <button key={m} type="button">
              {m}
            </button>
          ))}
        </nav>
      </header>
      <div className="flex min-h-0 flex-1">
        <ToolColumn />
        <main className="flex min-w-0 flex-1 flex-col">
          <Toolbar />
          <div className="flex h-[39px] shrink-0 items-center justify-between border-b-[3px] border-[#333436] bg-[#4d4d4d]">
            <div className="flex h-full items-center gap-[11px] border-t border-[#97989b] bg-linear-to-b from-[#86878a] to-[#6e6f72] pr-[14px] pl-[13px] text-[21px]">
              <span className="size-[11px] rounded-full bg-[#4b4c4e]" />
              Illustration* (1600 x 1200px 72dpi 100.0%)
            </div>
            <button
              type="button"
              aria-label="Document list"
              className="flex h-full w-[45px] items-center justify-center border border-[#8a8b8e] bg-linear-to-b from-[#86878a] to-[#6e6f72]"
            >
              <Svg w={24} h={12}>
                <path d="M0 0 H24 L12 12Z" fill="#38393b" />
              </Svg>
            </button>
          </div>
          <div className="flex flex-1 items-center bg-[#424242] pr-[70px] pb-[5px] pl-[68px]">
            <div className="aspect-[4/3] w-full bg-white" />
          </div>
        </main>
        <div className="flex w-[427px] shrink-0 flex-col">
          <DockHeader />
          <div className="flex min-h-0 flex-1">
            <div className="flex w-[351px] shrink-0 flex-col border-r-2 border-b-[6px] border-l-2 border-r-[#3a3b3e] border-b-[#505154] border-l-[#8f9094] bg-[#7a7b7f]">
              <SubToolPanel />
              <ToolPropertyPanel />
            </div>
            <SubToolDock />
          </div>
        </div>
        <div className="flex w-[414px] shrink-0 flex-col">
          <DockHeader />
          <div className="flex min-h-0 flex-1">
            <ColorPanels />
            <MaterialDock />
          </div>
        </div>
      </div>
    </div>
  );
}
